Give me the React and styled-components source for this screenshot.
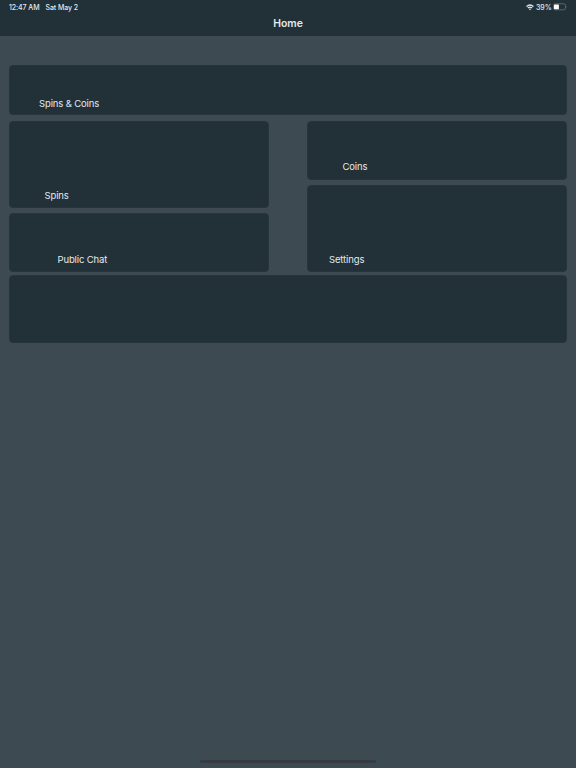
import React from 'react';
import styled, { createGlobalStyle, ThemeProvider } from 'styled-components';

const theme = {
  page: '#3d4a51',
  panel: '#223037',
  edge: '#26343b',
  text: '#e2eaed',
};

const GlobalStyle = createGlobalStyle`
  * {
    box-sizing: border-box;
  }
  body {
    margin: 0;
    background: ${theme.page};
    font-family: Inter, 'Liberation Sans', sans-serif;
  }
`;

const Screen = styled.div`
  display: flex;
  flex-direction: column;
  width: 576px;
  height: 768px;
  background: ${(p) => p.theme.page};
  color: ${(p) => p.theme.text};
  overflow: hidden;
`;

const Header = styled.header`
  height: 36px;
  flex: none;
  background: ${(p) => p.theme.panel};
`;

const StatusBar = styled.div`
  display: flex;
  align-items: center;
  height: 14px;
  padding: 0 8px 0 9px;
  font-size: 7px;
  font-weight: 500;
  letter-spacing: -0.08px;
  line-height: 14px;
  white-space: nowrap;
`;

const Clock = styled.span`
  width: 36.5px;
  padding-top: 1px;
`;

const Power = styled.div`
  display: flex;
  align-items: center;
  margin-left: auto;

  svg {
    display: block;
  }
`;

const Percent = styled.span`
  width: 17px;
  margin-left: 2px;
  padding-top: 1px;
  letter-spacing: -0.04px;
`;

const Title = styled.h1`
  margin: 0;
  font-size: 10.4px;
  font-weight: 600;
  line-height: 20px;
  text-align: center;
`;

const Content = styled.main`
  display: flex;
  flex-direction: column;
  flex: 1;
  padding: 29px 9px 0;
`;

const Columns = styled.div`
  display: grid;
  grid-template-columns: 260px 260px;
  justify-content: space-between;
  margin: 6px 0 3px;
`;

const Column = styled.div`
  display: flex;
  flex-direction: column;
  gap: 5px;
`;

const Card = styled.section`
  display: flex;
  align-items: flex-end;
  height: ${(p) => p.$height}px;
  padding: 0 0 ${(p) => p.$bottom || 0}px ${(p) => p.$indent || 0}px;
  border: 1px solid ${(p) => p.theme.edge};
  border-radius: 4px;
  background: ${(p) => p.theme.panel};
  font-size: 9.5px;
  letter-spacing: -0.14px;
  line-height: 12px;
`;

const Footer = styled.footer`
  display: flex;
  justify-content: center;
  height: 8px;
`;

const HomeIndicator = styled.div`
  width: 176px;
  height: 3px;
  border-radius: 2px;
  background: #353b41;
`;

const WifiIcon = () => (
  <svg width="8" height="7" viewBox="0 0 8 7" fill="none" stroke="#e2eaed" strokeWidth="1.25">
    <path d="M0.5 2.5 Q4 -0.5 7.5 2.5" />
    <path d="M1.8 4 Q4 2.1 6.2 4" />
    <path d="M2.9 4.9 Q4 4 5.1 4.9 L4 6.2 Z" fill="#e2eaed" stroke="none" />
  </svg>
);

const BatteryIcon = () => (
  <svg width="15" height="8" viewBox="0 0 15 8">
    <rect x="0.5" y="0.8" width="12" height="6" rx="1.7" fill="none" stroke="#64727a" strokeWidth="0.8" />
    <rect x="1" y="1.4" width="4.9" height="4.8" rx="0.6" fill="#f8fafb" />
    <path d="M13.3 2.8 Q14.6 3.8 13.3 4.8 Z" fill="#64727a" />
  </svg>
);

const App = () => (
  <ThemeProvider theme={ theme }>
    <GlobalStyle />
    <Screen>
      <Header>
        <StatusBar>
          <Clock>12:47 AM</Clock>
          <Clock>Sat May 2</Clock>
          <Power>
            <WifiIcon />
            <Percent>39%</Percent>
            <BatteryIcon />
          </Power>
        </StatusBar>
        <Title>Home</Title>
      </Header>
      <Content>
        <Card $height={ 50 } $indent={ 29 } $bottom={ 4 }>Spins &amp; Coins</Card>
        <Columns>
          <Column>
            <Card $height={ 87 } $indent={ 34.5 } $bottom={ 5.5 }>Spins</Card>
            <Card $height={ 59 } $indent={ 47.5 } $bottom={ 5.5 }>Public Chat</Card>
          </Column>
          <Column>
            <Card $height={ 59 } $indent={ 34.5 } $bottom={ 6 }>Coins</Card>
            <Card $height={ 87 } $indent={ 21 } $bottom={ 5.5 }>Settings</Card>
          </Column>
        </Columns>
        <Card $height={ 67.5 } />
      </Content>
      <Footer>
        <HomeIndicator />
      </Footer>
    </Screen>
  </ThemeProvider>
);

export default App;
